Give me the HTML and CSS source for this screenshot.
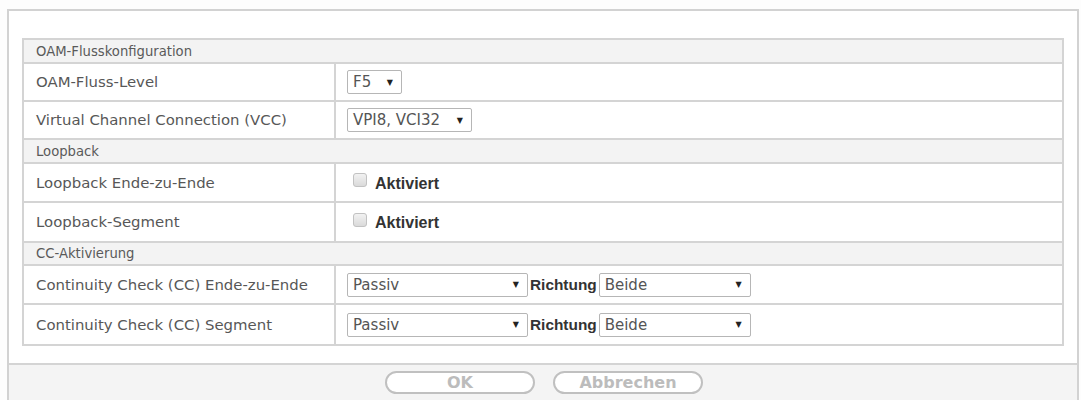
FILE: index.html
```html
<!DOCTYPE html>
<html lang="de">
<head>
<meta charset="utf-8">
<link rel="stylesheet" href="styles.css">
</head>
<body>
<div class="frame">
  <div class="content">
    <table class="cfg">
      <tr class="sec"><td colspan="2">OAM-Flusskonfiguration</td></tr>
      <tr class="r38"><td class="lbl">OAM-Fluss-Level</td><td class="val"><span class="sel w-f5"><span class="txt">F5</span><span class="arr">&#9660;</span></span></td></tr>
      <tr class="r38"><td class="lbl">Virtual Channel Connection (VCC)</td><td class="val"><span class="sel w-vcc"><span class="txt">VPI8, VCI32</span><span class="arr">&#9660;</span></span></td></tr>
      <tr class="sec"><td colspan="2">Loopback</td></tr>
      <tr class="r39"><td class="lbl">Loopback Ende-zu-Ende</td><td class="val"><span class="chk"></span><span class="bold">Aktiviert</span></td></tr>
      <tr class="r40"><td class="lbl">Loopback-Segment</td><td class="val"><span class="chk"></span><span class="bold">Aktiviert</span></td></tr>
      <tr class="sec sec-s"><td colspan="2">CC-Aktivierung</td></tr>
      <tr class="r39"><td class="lbl">Continuity Check (CC) Ende-zu-Ende</td><td class="val"><span class="sel w-pass"><span class="txt">Passiv</span><span class="arr">&#9660;</span></span><span class="bold ri">Richtung</span><span class="sel w-beide"><span class="txt">Beide</span><span class="arr">&#9660;</span></span></td></tr>
      <tr class="r41"><td class="lbl">Continuity Check (CC) Segment</td><td class="val"><span class="sel w-pass"><span class="txt">Passiv</span><span class="arr">&#9660;</span></span><span class="bold ri">Richtung</span><span class="sel w-beide"><span class="txt">Beide</span><span class="arr">&#9660;</span></span></td></tr>
    </table>
  </div>
  <div class="bar">
    <span class="btn b-ok">OK</span>
    <span class="btn b-ab">Abbrechen</span>
  </div>
</div>
</body>
</html>
```
FILE: styles.css
```css
html, body {
  margin: 0;
  padding: 0;
  background: #fdfdfd;
  font-family: "DejaVu Sans", "Liberation Sans", sans-serif;
  color: #555;
}
.frame {
  margin: 9px 0 0 7px;
  width: 1068px;
  border: 2px solid #d2d2d2;
  border-bottom: none;
  background: #fff;
}
.content {
  padding: 27px 13px 17px 13px;
}
.cfg {
  width: 100%;
  border-collapse: collapse;
  border: 2px solid #cdcdcd;
}
.cfg td {
  border: 2px solid #d4d4d4;
  padding: 0;
}
.sec td {
  background: #f3f3f3;
  font-size: 13.2px;
  color: #5a5a5a;
  height: 22px;
  padding-left: 12px;
}
.sec-s td { height: 21px; }
.lbl {
  width: 298px;
  padding-left: 12px !important;
  font-size: 14.9px;
  color: #575757;
}
.val {
  padding-left: 11px !important;
}
.r38 td { height: 36px; }
.r39 td { height: 37px; }
.r40 td { height: 38px; }
.r41 td { height: 39px; }
.sel {
  display: inline-flex;
  align-items: center;
  justify-content: space-between;
  box-sizing: border-box;
  height: 24px;
  border: 1px solid #b6b6b6;
  border-radius: 2px;
  background: #fff;
  padding: 0 8px 0 5px;
  vertical-align: middle;
  color: #555;
  font-size: 15px;
}
.arr {
  font-size: 8px;
  color: #222;
}
.w-f5 { width: 55px; }
.w-vcc { width: 125px; }
.w-pass { width: 181px; }
.w-beide { width: 152px; }
.chk {
  display: inline-block;
  box-sizing: border-box;
  width: 14px;
  height: 14px;
  border: 1px solid #c2c2c2;
  border-radius: 3px;
  background: linear-gradient(#f2f2f2, #dadada);
  vertical-align: middle;
  margin: 0 8px 0 6px;
  position: relative;
  top: -3px;
}
.bold {
  font-family: "Liberation Sans", Arial, sans-serif;
  font-weight: bold;
  color: #333;
  font-size: 16px;
  vertical-align: middle;
}
.ri {
  margin: 0 2px 0 2px;
  font-size: 15.4px;
}
.bar {
  border-top: 2px solid #d4d4d4;
  background: #f4f4f4;
  height: 38px;
  display: flex;
  align-items: flex-start;
  padding-top: 6px;
  box-sizing: border-box;
  padding-left: 376px;
  gap: 18px;
}
.btn {
  display: inline-flex;
  align-items: center;
  justify-content: center;
  box-sizing: border-box;
  height: 23px;
  border: 2px solid #c0c0c0;
  border-radius: 12px;
  background: #fff;
  color: #bcbcbc;
  font-weight: bold;
  font-size: 16px;
}
.b-ok { width: 150px; }
.b-ab { width: 150px; }
```
